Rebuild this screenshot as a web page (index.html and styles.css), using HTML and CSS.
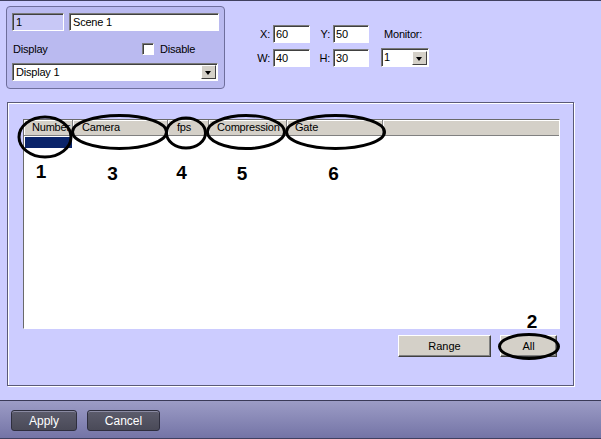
FILE: index.html
```html
<!DOCTYPE html>
<html>
<head>
  <link rel="stylesheet" href="styles.css">
</head>
<body>
  <div class="window">
    <div class="top">
      <div class="scene-panel">
        <div class="row1">
          <div class="field id-field">1</div>
          <div class="field name-field">Scene 1</div>
        </div>
        <div class="row2">
          <span class="label">Display</span>
          <label class="check"><span class="box"></span>Disable</label>
        </div>
        <div class="field combo wide"><span>Display 1</span><span class="arrow"></span></div>
      </div>

      <div class="coords">
        <span class="lbl">X:</span>
        <div class="field">60</div>
        <span class="lbl">Y:</span>
        <div class="field">50</div>
        <span></span>
        <span class="mon-lbl">Monitor:</span>

        <span class="lbl">W:</span>
        <div class="field">40</div>
        <span class="lbl">H:</span>
        <div class="field">30</div>
        <span></span>
        <div class="field combo mon"><span>1</span><span class="arrow"></span></div>
      </div>
    </div>

    <div class="group">
      <div class="list">
        <div class="list-head">
          <div class="col c-num">Number</div>
          <div class="col c-cam">Camera</div>
          <div class="col c-fps">fps</div>
          <div class="col c-comp">Compression</div>
          <div class="col c-gate">Gate</div>
          <div class="col c-rest"></div>
        </div>
        <div class="list-row">
          <div class="sel"></div>
        </div>
      </div>
      <div class="list-buttons">
        <button class="btn range">Range</button>
        <button class="btn all">All</button>
      </div>
    </div>

    <div class="footer">
      <button class="fbtn apply">Apply</button>
      <button class="fbtn cancel">Cancel</button>
    </div>

    <!-- callout marks drawn over the dialog -->
    <svg class="marks" width="601" height="439" viewBox="0 0 601 439">
      <g fill="none" stroke="#000" stroke-width="3">
        <ellipse cx="45" cy="136" rx="26" ry="20"/>
        <ellipse cx="119.5" cy="131" rx="47" ry="16.5"/>
        <ellipse cx="186" cy="132" rx="19.5" ry="15"/>
        <ellipse cx="246" cy="131" rx="38.5" ry="16.5"/>
        <ellipse cx="335.5" cy="131" rx="49" ry="16.5"/>
        <ellipse cx="529" cy="345.5" rx="29.5" ry="12"/>
      </g>
      <g class="nums" text-anchor="middle">
        <text x="41" y="177">1</text>
        <text x="112.5" y="179">3</text>
        <text x="181.5" y="178">4</text>
        <text x="242" y="179">5</text>
        <text x="333.5" y="179">6</text>
        <text x="532" y="327">2</text>
      </g>
    </svg>
  </div>
</body>
</html>
```

FILE: styles.css
```css
body {
  margin: 0;
}
.window {
  position: relative;
  width: 601px;
  height: 439px;
  box-sizing: border-box;
  border-top: 1px solid #404060;
  background-color: #ccccff;
  display: flex;
  flex-direction: column;
  font-family: "Liberation Sans", Arial, sans-serif;
  font-size: 11px;
  letter-spacing: -0.2px;
  color: #000;
  overflow: hidden;
}

/* top part */
.top {
  height: 101px;
  display: flex;
  flex-shrink: 0;
}
.scene-panel {
  margin: 5px 0 0 6px;
  width: 219px;
  height: 83px;
  box-sizing: border-box;
  border: 1px solid #6e6e9c;
  border-radius: 4px;
  background-color: #babaf0;
  padding: 6px 5px 0;
}
.row1 {
  display: flex;
  gap: 5px;
}
.field {
  height: 18px;
  box-sizing: border-box;
  border-top: 1px solid #7a7a7a;
  border-left: 1px solid #7a7a7a;
  border-right: 1px solid #fff;
  border-bottom: 1px solid #fff;
  box-shadow: inset 1px 1px 0 #404040;
  background-color: #fff;
  padding: 0 3px;
  line-height: 17px;
  white-space: nowrap;
}
.id-field {
  width: 52px;
  background-color: #c8c8f6;
}
.name-field {
  width: 150px;
}
.row2 {
  margin-top: 6px;
  height: 24px;
  display: grid;
  grid-template-columns: 130px auto;
  align-items: center;
}
.row2 .label {
  padding-left: 1px;
}
.check {
  display: flex;
  align-items: center;
}
.box {
  width: 12px;
  height: 12px;
  box-sizing: border-box;
  border-top: 1px solid #7a7a7a;
  border-left: 1px solid #7a7a7a;
  border-right: 1px solid #fff;
  border-bottom: 1px solid #fff;
  box-shadow: inset 1px 1px 0 #404040;
  background-color: #fff;
  margin-right: 6px;
}
.combo {
  display: flex;
  align-items: center;
  padding-right: 1px;
}
.wide {
  margin-top: 2px;
  width: 206px;
}
.arrow {
  margin-left: auto;
  width: 15px;
  height: 14px;
  box-sizing: border-box;
  background-color: #d4d0c8;
  border-top: 1px solid #fff;
  border-left: 1px solid #fff;
  border-right: 1px solid #404040;
  border-bottom: 1px solid #404040;
  position: relative;
}
.arrow::after {
  content: "";
  position: absolute;
  left: 3px;
  top: 5px;
  border-left: 3.5px solid transparent;
  border-right: 3.5px solid transparent;
  border-top: 4px solid #000;
}

.coords {
  margin: 24px 0 0 32px;
  display: grid;
  grid-template-columns: 16px 37px 23px 36px 12px 48px;
  grid-template-rows: 18px 19px;
  row-gap: 5px;
  align-items: center;
  align-self: flex-start;
}
.coords .lbl {
  text-align: right;
  padding-right: 3px;
}
.coords .field {
  padding-left: 2px;
}
.mon-lbl {
  padding-left: 3px;
  white-space: nowrap;
}
.mon {
  height: 19px;
}

/* group box */
.group {
  margin-left: 7px;
  width: 567px;
  height: 284px;
  box-sizing: border-box;
  flex-shrink: 0;
  border: 1px solid #5a5a78;
  box-shadow: inset 1px 1px 0 #fff, 1px 1px 0 #fff;
  padding: 16px 0 0 15px;
}
.list {
  width: 537px;
  height: 210px;
  box-sizing: border-box;
  border-top: 1px solid #6a6a6a;
  border-left: 1px solid #6a6a6a;
  border-right: 1px solid #fff;
  border-bottom: 1px solid #fff;
  background-color: #fff;
}
.list-head {
  display: flex;
  height: 16px;
  box-sizing: border-box;
  background-color: #d4d0c8;
  border-bottom: 1px solid #808080;
}
.col {
  box-sizing: border-box;
  padding-left: 8px;
  line-height: 15px;
  border-right: 1px solid #808080;
  box-shadow: inset 1px 1px 0 #fff;
  white-space: nowrap;
  overflow: hidden;
}
.c-num { width: 49px; }
.c-cam { width: 95px; padding-left: 9px; }
.c-fps { width: 41px; padding-left: 9px; }
.c-comp { width: 78px; }
.c-gate { width: 96px; }
.c-rest { flex: 1; border-right: none; }
.list-row {
  height: 13px;
  box-sizing: border-box;
  padding: 1px 0 0 1px;
}
.sel {
  width: 47px;
  height: 11px;
  background-color: #0a246a;
}
.list-buttons {
  width: 537px;
  box-sizing: border-box;
  margin-top: 6px;
  padding-right: 3px;
  display: flex;
  justify-content: flex-end;
  gap: 9px;
}
.btn {
  height: 22px;
  box-sizing: border-box;
  background-color: #d4d0c8;
  border-top: 1px solid #fff;
  border-left: 1px solid #fff;
  border-right: 1px solid #404040;
  border-bottom: 1px solid #404040;
  box-shadow: inset -1px -1px 0 #808080;
  font-family: "Liberation Sans", Arial, sans-serif;
  font-size: 11px;
  color: #000;
  padding: 0;
}
.range { width: 93px; }
.all { width: 57px; }

/* bottom bar */
.footer {
  margin-top: 14px;
  height: 39px;
  box-sizing: border-box;
  flex-shrink: 0;
  border-top: 1px solid #3a3a58;
  border-bottom: 1px solid #404060;
  background: linear-gradient(#9c9cc6, #7474a6);
  padding: 9px 0 0 11px;
  display: flex;
  gap: 10px;
  align-items: flex-start;
}
.fbtn {
  height: 21px;
  box-sizing: border-box;
  border: 1px solid #2e2e3e;
  border-radius: 3px;
  box-shadow: inset 0 1px 0 #8a8aa2;
  background: linear-gradient(#5c5c6c, #4a4a58);
  color: #fff;
  font-family: "Liberation Sans", Arial, sans-serif;
  font-size: 12px;
  padding: 0;
}
.apply { width: 66px; }
.cancel { width: 73px; }

/* callouts */
.marks {
  position: absolute;
  top: 0;
  left: 0;
  pointer-events: none;
}
.nums text {
  font-family: "Liberation Sans", Arial, sans-serif;
  font-weight: bold;
  font-size: 19px;
  letter-spacing: 0;
  fill: #000;
}
```
